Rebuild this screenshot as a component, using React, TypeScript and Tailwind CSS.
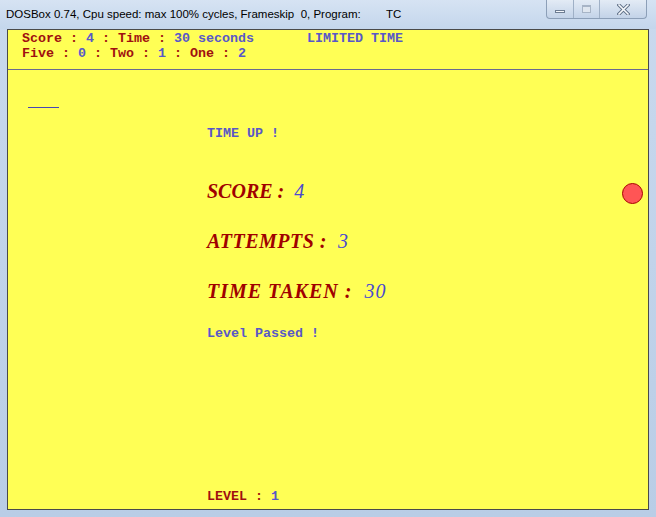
import React from 'react';

const mono = { fontFamily: '"Liberation Mono", "DejaVu Sans Mono", monospace' };
const serif = { fontFamily: '"Liberation Serif", "Times New Roman", serif' };

const Label: React.FC<{ children: React.ReactNode }> = ({ children }) => (
  <span className="text-[#a01010]">{children}</span>
);
const Val: React.FC<{ children: React.ReactNode }> = ({ children }) => (
  <span className="text-[#5858c8]">{children}</span>
);

const BigLine: React.FC<{ label: string; value: string; spacing: string }> = ({ label, value, spacing }) => (
  <div className={`italic font-bold text-[20px] leading-[24px] whitespace-pre ${spacing}`} style={serif}>
    <span className="text-[#a00000]">{label} : </span>
    <span className="text-[#4a4ad0] font-normal"> {value}</span>
  </div>
);

const App: React.FC = () => {
  return (
    <div className="w-[656px] h-[517px] flex flex-col bg-gradient-to-b from-[#c9d9ee] to-[#b9cde6] overflow-hidden">
      {/* title bar */}
      <div className="h-[29px] flex items-start justify-between bg-gradient-to-b from-[#d6e3f3] to-[#c4d6ec]">
        <div
          className="pl-[6px] pt-[6px] text-[11.5px] leading-[16px] text-black whitespace-pre"
          style={{ fontFamily: '"Liberation Sans", Arial, sans-serif' }}
        >
          DOSBox 0.74, Cpu speed: max 100% cycles, Frameskip  0, Program:        TC
        </div>
        <div className="mr-[9px] flex h-[19px] border border-t-0 border-[#8c9fb8] rounded-b-[4px] overflow-hidden bg-gradient-to-b from-[#e3ebf5] to-[#c3d3e8]">
          <div className="w-[27px] flex items-center justify-center border-r border-[#9fb0c6]">
            <div className="w-[10px] h-[3px] mt-[4px] bg-[#f4f7fb] border border-[#6d7d93]" />
          </div>
          <div className="w-[26px] flex items-center justify-center border-r border-[#9fb0c6]">
            <div className="w-[9px] h-[8px] border border-[#a7b4c6] border-t-[2px] bg-[#dfe6ef]" />
          </div>
          <div className="w-[46px] flex items-center justify-center">
            <svg width="13" height="11" viewBox="0 0 13 11">
              <path d="M2 1 L11 10 M11 1 L2 10" stroke="#5f6f86" strokeWidth="3.4" strokeLinecap="square" />
              <path d="M2 1 L11 10 M11 1 L2 10" stroke="#f5f8fc" strokeWidth="1.6" strokeLinecap="square" />
            </svg>
          </div>
        </div>
      </div>

      {/* client area */}
      <div className="flex-1 mx-[7px] mb-[7px] border border-[#4a4a4a] bg-[#ffff55] flex flex-col font-bold text-[13.33px] leading-[15px]" style={mono}>
        <div className="h-[40px] border-b border-[#6a6a90] pl-[14px] pt-[1px] flex flex-col whitespace-pre">
          <div className="flex">
            <span className="w-[285px]">
              <Label>Score : </Label><Val>4</Val><Label> : Time : </Label><Val>30 seconds</Val>
            </span>
            <Val>LIMITED TIME</Val>
          </div>
          <div>
            <Label>Five : </Label><Val>0</Val><Label> : Two : </Label><Val>1</Val><Label> : One : </Label><Val>2</Val>
          </div>
        </div>

        <div className="relative flex-1 flex flex-col">
          <div className="ml-[20px] mt-[37px] w-[31px] h-[1px] bg-[#4646b4]" />
          <div className="pl-[199px] flex flex-col">
            <div className="mt-[18px] whitespace-pre"><Val>TIME UP !</Val></div>
            <div className="mt-[38px]"><BigLine label="SCORE" value="4" spacing="tracking-[0px]" /></div>
            <div className="mt-[26px]"><BigLine label="ATTEMPTS" value="3" spacing="tracking-[0.5px]" /></div>
            <div className="mt-[26px]"><BigLine label="TIME TAKEN" value="30" spacing="tracking-[1px]" /></div>
            <div className="mt-[23px] whitespace-pre"><Val>Level Passed !</Val></div>
            <div className="mt-[148px] whitespace-pre">
              <Label>LEVEL : </Label><Val>1</Val>
            </div>
          </div>
          <div className="absolute left-[614px] top-[113px] w-[21px] h-[21px] rounded-full bg-[#ff5555] border border-[#a80000]" />
        </div>
      </div>
    </div>
  );
};

export default App;
